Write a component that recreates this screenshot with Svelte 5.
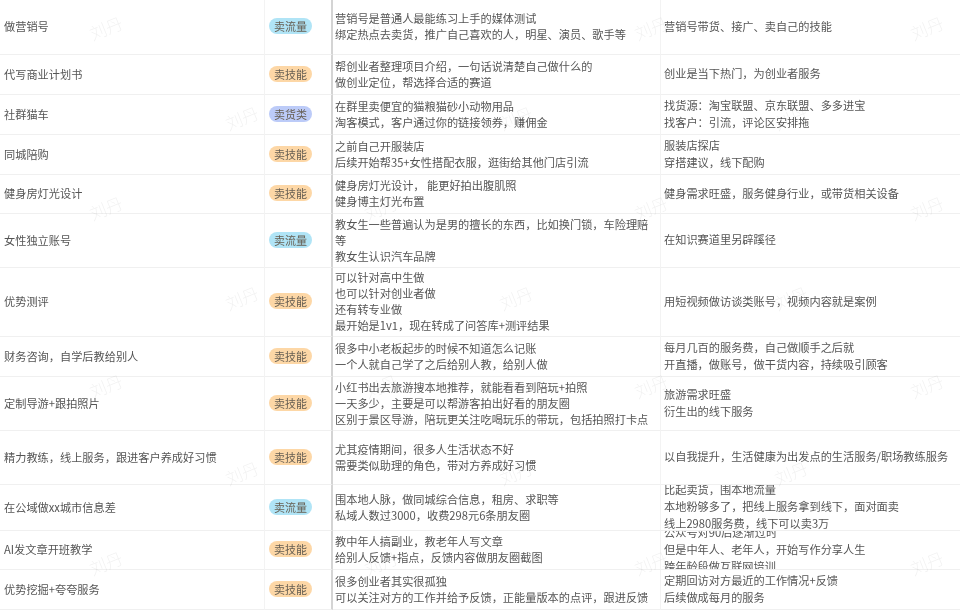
<script>
  const tagClass = { 卖流量: "flow", 卖技能: "skill", 卖货类: "goods" };

  const rows = [
    { name: "做营销号", tag: "卖流量", how: "营销号是普通人最能练习上手的媒体测试\n绑定热点去卖货，推广自己喜欢的人，明星、演员、歌手等", why: "营销号带货、接广、卖自己的技能" },
    { name: "代写商业计划书", tag: "卖技能", how: "帮创业者整理项目介绍，一句话说清楚自己做什么的\n做创业定位，帮选择合适的赛道", why: "创业是当下热门，为创业者服务" },
    { name: "社群猫车", tag: "卖货类", how: "在群里卖便宜的猫粮猫砂小动物用品\n淘客模式，客户通过你的链接领券，赚佣金", why: "找货源：淘宝联盟、京东联盟、多多进宝\n找客户：引流，评论区安排拖" },
    { name: "同城陪购", tag: "卖技能", how: "之前自己开服装店\n后续开始帮35+女性搭配衣服，逛街给其他门店引流", why: "服装店探店\n穿搭建议，线下配购" },
    { name: "健身房灯光设计", tag: "卖技能", how: "健身房灯光设计， 能更好拍出腹肌照\n健身博主灯光布置", why: "健身需求旺盛，服务健身行业，或带货相关设备" },
    { name: "女性独立账号", tag: "卖流量", how: "教女生一些普遍认为是男的擅长的东西，比如换门锁，车险理赔等\n教女生认识汽车品牌", why: "在知识赛道里另辟蹊径" },
    { name: "优势测评", tag: "卖技能", how: "可以针对高中生做\n也可以针对创业者做\n还有转专业做\n最开始是1v1，现在转成了问答库+测评结果", why: "用短视频做访谈类账号，视频内容就是案例" },
    { name: "财务咨询，自学后教给别人", tag: "卖技能", how: "很多中小老板起步的时候不知道怎么记账\n一个人就自己学了之后给别人教，给别人做", why: "每月几百的服务费，自己做顺手之后就\n开直播，做账号，做干货内容，持续吸引顾客" },
    { name: "定制导游+跟拍照片", tag: "卖技能", how: "小红书出去旅游搜本地推荐，就能看看到陪玩+拍照\n一天多少，主要是可以帮游客拍出好看的朋友圈\n区别于景区导游，陪玩更关注吃喝玩乐的带玩，包括拍照打卡点", why: "旅游需求旺盛\n衍生出的线下服务" },
    { name: "精力教练，线上服务，跟进客户养成好习惯", tag: "卖技能", how: "尤其疫情期间，很多人生活状态不好\n需要类似助理的角色，带对方养成好习惯", why: "以自我提升，生活健康为出发点的生活服务/职场教练服务" },
    { name: "在公域做xx城市信息差", tag: "卖流量", how: "围本地人脉，做同城综合信息，租房、求职等\n私域人数过3000，收费298元6条朋友圈", why: "比起卖货，围本地流量\n本地粉够多了，把线上服务拿到线下，面对面卖\n线上2980服务费，线下可以卖3万" },
    { name: "AI发文章开班教学", tag: "卖技能", how: "教中年人搞副业，教老年人写文章\n给别人反馈+指点，反馈内容做朋友圈截图", why: "公众号对90后逐渐过时\n但是中年人、老年人，开始写作分享人生\n跨年龄段做互联网培训" },
    { name: "优势挖掘+夸夸服务", tag: "卖技能", how: "很多创业者其实很孤独\n可以关注对方的工作并给予反馈，正能量版本的点评，跟进反馈", why: "定期回访对方最近的工作情况+反馈\n后续做成每月的服务" },
  ];

  // 水印是错开排的两组
  const marks = [
    [89, 18], [364, 18], [634, 18], [910, 18],
    [225, 108], [499, 108], [774, 108],
    [89, 198], [364, 198], [634, 198], [910, 198],
    [225, 288], [499, 288], [774, 288],
    [89, 376], [364, 376], [634, 376], [910, 376],
    [225, 463], [499, 463], [774, 463],
    [89, 553], [364, 553], [634, 553], [910, 553],
  ];
</script>

<div class="sheet">
  <div class="table">
    {#each rows as row}
      <div class="cell name">{row.name}</div>
      <div class="cell tagcell">
        <span class="tag {tagClass[row.tag]}">{row.tag}</span>
      </div>
      <div class="cell how"><div>{row.how}</div></div>
      <div class="cell why"><div>{row.why}</div></div>
    {/each}
  </div>

  {#each marks as [x, y]}
    <span class="mark" style="left: {x}px; top: {y}px">刘丹</span>
  {/each}
</div>

<style>
  :global(body) {
    background: #fff;
  }

  .sheet {
    position: relative;
    width: 960px;
    height: 610px;
    overflow: hidden;
    background: #fff;
    color: #555;
    font-family: "Noto Sans CJK SC", "Liberation Sans", sans-serif;
    font-size: 11.2px;
    filter: blur(0.4px);
  }

  .table {
    display: grid;
    grid-template-columns: 265px 68px 328px 299px;
    grid-template-rows: 55px 40px 40px 40px 39px 54px 69px 40px 54px 54px 46px 39px 40px;
  }

  .cell {
    display: flex;
    align-items: center;
    box-sizing: border-box;
    overflow: hidden;
    padding-bottom: 2px;
    border-bottom: 1px solid #f0f0f0;
    white-space: pre-line;
  }

  .name {
    padding-left: 4px;
    border-right: 1px solid #f3f3f3;
  }

  .tagcell {
    padding-left: 4px;
    border-right: 2px solid #d4d4d4;
  }

  .tag {
    width: 43px;
    height: 16px;
    border-radius: 8px;
    line-height: 16px;
    text-align: center;
    font-size: 11px;
    color: #665e52;
  }

  .flow {
    background: #b0e4f6;
  }

  .skill {
    background: #fdd7a6;
  }

  .goods {
    background: #bccbf8;
  }

  .how {
    padding-left: 2px;
    padding-right: 8px;
    line-height: 16px;
    border-right: 1px solid #f3f3f3;
  }

  .why {
    padding-left: 3px;
    line-height: 17px;
  }

  .mark {
    position: absolute;
    font-size: 17px;
    font-weight: 300;
    line-height: 20px;
    color: rgba(0, 0, 0, 0.055);
    transform: rotate(-22deg);
    pointer-events: none;
  }
</style>
